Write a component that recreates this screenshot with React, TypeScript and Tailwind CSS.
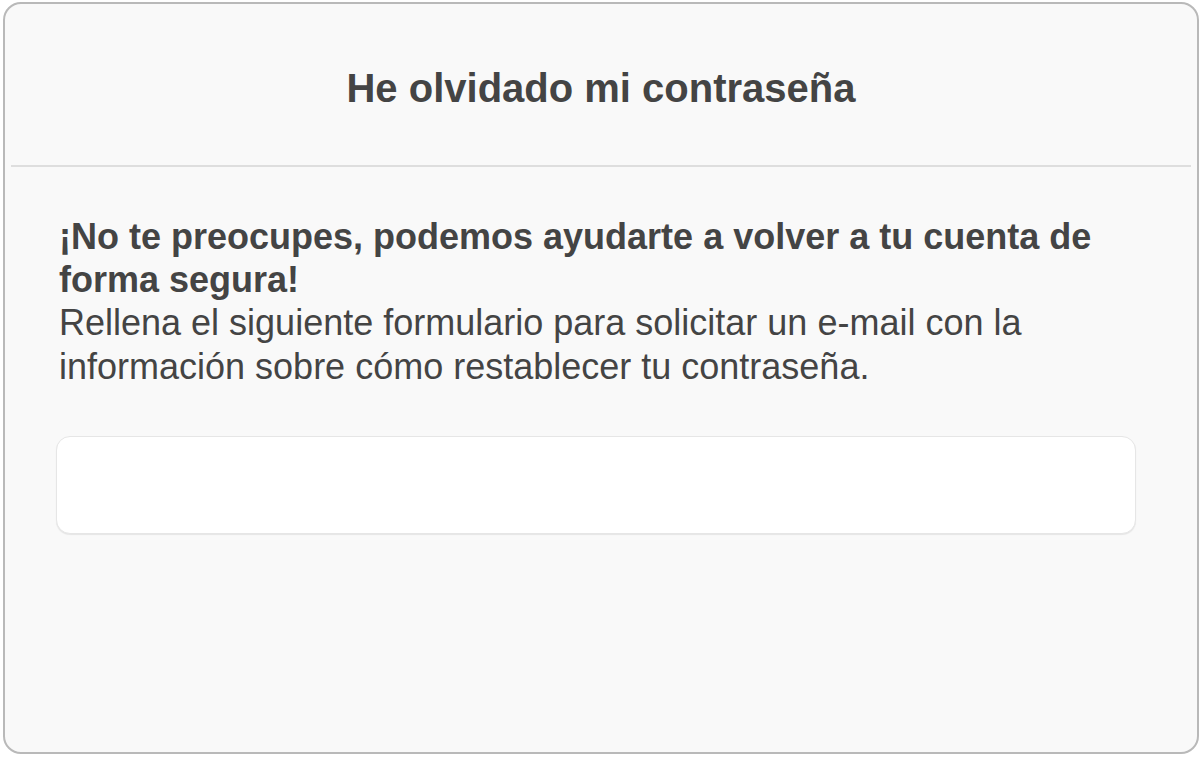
export default function App() {
  return (
    <div className="min-h-[758px] bg-white pl-[3px] pt-[2px] font-['Liberation_Sans',Arial,Helvetica,sans-serif] text-[#444]">
      <div className="flex h-[752px] w-[1196px] flex-col rounded-[18px] border-2 border-[#b9b9b9] bg-[#f9f9f9]">
        {/* Header */}
        <div className="mx-[6px] h-[163px] border-b-2 border-[#dedede] pt-[61px] text-center">
          <h1 className="text-[40px] font-bold leading-[46px]">He olvidado mi contraseña</h1>
        </div>

        {/* Body */}
        <div className="pl-[51px] pr-[61px] pt-[48px]">
          <div className="ml-[3px] text-[36px] leading-[1.2]">
            <p className="font-bold">¡No te preocupes, podemos ayudarte a volver a tu cuenta de forma segura!</p>
            <p>Rellena el siguiente formulario para solicitar un e-mail con la información sobre cómo restablecer tu contraseña.</p>
          </div>

          <div className="mt-[48px]">
            <input
              type="email"
              aria-label="E-mail"
              className="block h-[98px] w-full rounded-[14px] border border-[#e6e6e6] bg-white shadow-[0_1px_1px_rgba(0,0,0,0.08)] outline-none"
            />
          </div>
        </div>
      </div>
    </div>
  );
}
